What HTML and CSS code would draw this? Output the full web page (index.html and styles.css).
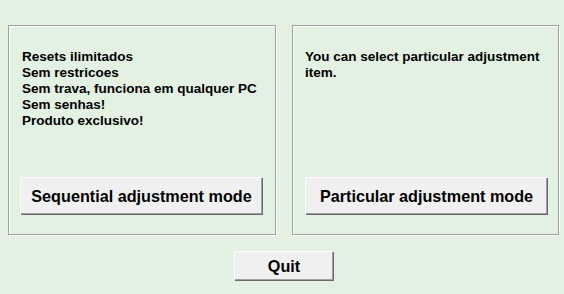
FILE: index.html
```html
<!DOCTYPE html>
<html>
<head>
<meta charset="utf-8">
<link rel="stylesheet" href="styles.css">
</head>
<body>
<div class="app">
  <div class="panels">
    <div class="panel panel-left">
      <div class="info">Resets ilimitados<br>Sem restricoes<br>Sem trava, funciona em qualquer PC<br>Sem senhas!<br>Produto exclusivo!</div>
      <button class="btn btn-mode">Sequential adjustment mode</button>
    </div>
    <div class="panel panel-right">
      <div class="info">You can select particular adjustment<br>item.</div>
      <button class="btn btn-mode">Particular adjustment mode</button>
    </div>
  </div>
  <div class="footer">
    <button class="btn btn-quit">Quit</button>
  </div>
</div>
</body>
</html>
```
FILE: styles.css
```css
html, body {
  margin: 0;
  padding: 0;
  background: #e2f1e2;
  width: 564px;
  height: 294px;
  overflow: hidden;
  font-family: "Liberation Sans", Arial, sans-serif;
  color: #000;
}
.app {
  padding: 25px 0 0 8px;
}
.panels {
  display: flex;
  gap: 16px;
}
.panel {
  box-sizing: border-box;
  height: 210px;
  border: 1px solid #a0a0a0;
  box-shadow: inset 1px 1px 0 #fff, 1px 1px 0 #fff;
  display: flex;
  flex-direction: column;
  padding-top: 23px;
  padding-bottom: 20px;
}
.panel-left {
  width: 268px;
  padding-left: 13px;
}
.panel-right {
  width: 267px;
  padding-left: 12px;
}
.info {
  font-weight: bold;
  font-size: 13.5px;
  line-height: 16px;
}
.btn {
  font-family: "Liberation Sans", Arial, sans-serif;
  font-weight: bold;
  font-size: 16.2px;
  color: #000;
  background: #f0f0f0;
  border: none;
  border-top: 1px solid #fff;
  border-left: 1px solid #fff;
  box-shadow: 1px 1px 0 #696969, inset -1px -1px 0 #a0a0a0;
  padding: 0;
  margin: 0;
  cursor: default;
}
.btn-mode {
  margin-top: auto;
  margin-left: -2px;
  width: 242px;
  height: 37px;
}
.panel-right .btn-mode {
  margin-left: 0;
}
.footer {
  display: flex;
  padding-top: 16px;
  padding-left: 226px;
}
.btn-quit {
  width: 99px;
  height: 29px;
}
```
